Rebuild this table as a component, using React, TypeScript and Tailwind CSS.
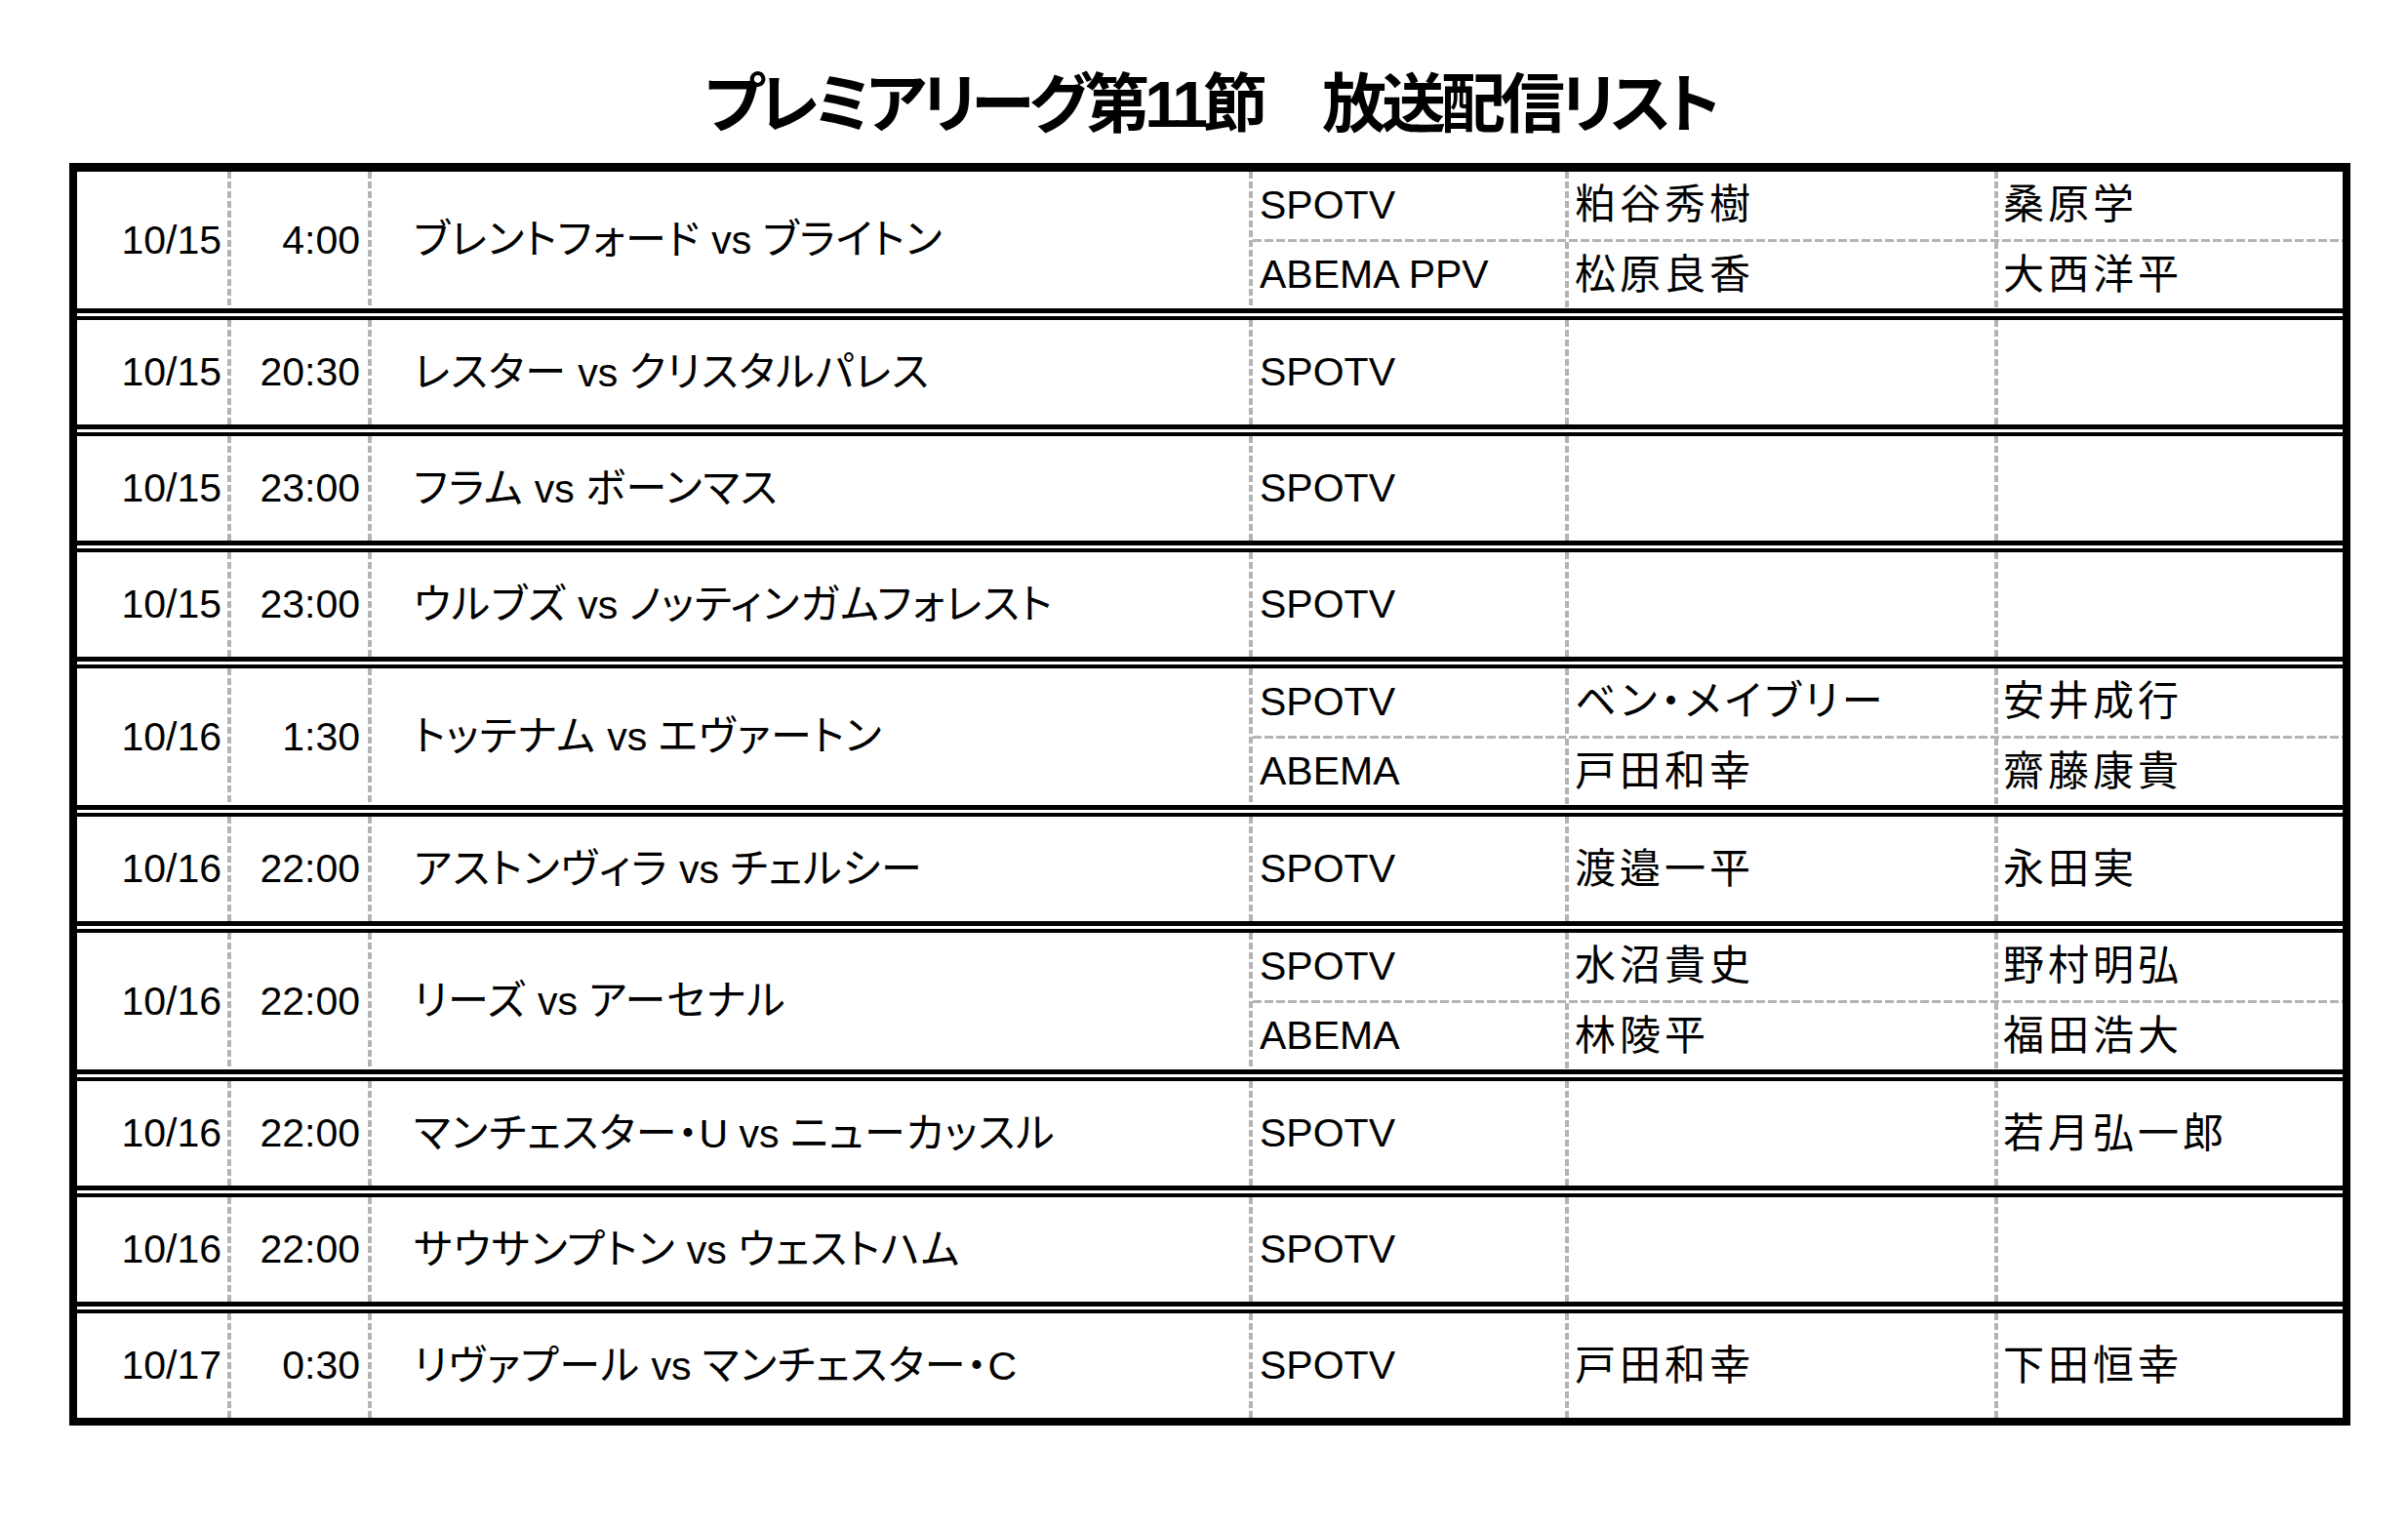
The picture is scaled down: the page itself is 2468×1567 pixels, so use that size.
import { Fragment } from "react";

type Line = { ch: string; a?: string; b?: string };
type Match = { date: string; time: string; match: string; lines: Line[] };

const matches: Match[] = [
  {
    date: "10/15",
    time: "4:00",
    match: "ブレントフォード vs ブライトン",
    lines: [
      { ch: "SPOTV", a: "粕谷秀樹", b: "桑原学" },
      { ch: "ABEMA PPV", a: "松原良香", b: "大西洋平" },
    ],
  },
  { date: "10/15", time: "20:30", match: "レスター vs クリスタルパレス", lines: [{ ch: "SPOTV" }] },
  { date: "10/15", time: "23:00", match: "フラム vs ボーンマス", lines: [{ ch: "SPOTV" }] },
  { date: "10/15", time: "23:00", match: "ウルブズ vs ノッティンガムフォレスト", lines: [{ ch: "SPOTV" }] },
  {
    date: "10/16",
    time: "1:30",
    match: "トッテナム vs エヴァートン",
    lines: [
      { ch: "SPOTV", a: "ベン・メイブリー", b: "安井成行" },
      { ch: "ABEMA", a: "戸田和幸", b: "齋藤康貴" },
    ],
  },
  {
    date: "10/16",
    time: "22:00",
    match: "アストンヴィラ vs チェルシー",
    lines: [{ ch: "SPOTV", a: "渡邉一平", b: "永田実" }],
  },
  {
    date: "10/16",
    time: "22:00",
    match: "リーズ vs アーセナル",
    lines: [
      { ch: "SPOTV", a: "水沼貴史", b: "野村明弘" },
      { ch: "ABEMA", a: "林陵平", b: "福田浩大" },
    ],
  },
  {
    date: "10/16",
    time: "22:00",
    match: "マンチェスター・U vs ニューカッスル",
    lines: [{ ch: "SPOTV", b: "若月弘一郎" }],
  },
  { date: "10/16", time: "22:00", match: "サウサンプトン vs ウェストハム", lines: [{ ch: "SPOTV" }] },
  {
    date: "10/17",
    time: "0:30",
    match: "リヴァプール vs マンチェスター・C",
    lines: [{ ch: "SPOTV", a: "戸田和幸", b: "下田恒幸" }],
  },
];

// latin runs are set a bit smaller than the japanese ones, like the printed sheet
function Jp({ text, tight }: { text?: string; tight?: boolean }) {
  if (!text) return null;
  const parts = text.split(/([\x20-\x7e]+)/).filter((p) => p !== "");
  return (
    <span className="whitespace-pre leading-none">
      {parts.map((p, i) =>
        /^[\x20-\x7e]+$/.test(p) ? (
          <span key={i} className="text-[41px]">
            {p}
          </span>
        ) : (
          <span key={i} className={tight ? "text-[42px] tracking-[1px]" : "text-[42px] tracking-[4px]"}>
            {p}
          </span>
        )
      )}
    </span>
  );
}

const VDash = () => (
  <div className="w-[4px] shrink-0 self-stretch bg-[image:repeating-linear-gradient(to_bottom,#b4b4b4_0px,#b4b4b4_7px,transparent_7px,transparent_10px)]" />
);

const HDash = () => (
  <div className="h-[3px] shrink-0 bg-[image:repeating-linear-gradient(to_right,#b4b4b4_0px,#b4b4b4_9px,transparent_9px,transparent_12px)]" />
);

function Row({ m, first, last }: { m: Match; first: boolean; last: boolean }) {
  const double = m.lines.length > 1;
  return (
    <div
      className={`${first ? "" : "mt-[3px] border-t-[4px] border-black"} ${
        last ? "" : "border-b-[5px] border-black"
      }`}
    >
      <div className={`flex ${double ? "h-[140px]" : "h-[107px]"}`}>
        <div className="flex w-[154px] shrink-0 items-center justify-end pr-[6px]">
          <Jp text={m.date} />
        </div>
        <VDash />
        <div className="flex w-[140px] shrink-0 items-center justify-end pr-[8px]">
          <Jp text={m.time} />
        </div>
        <VDash />
        <div className="flex w-[899px] shrink-0 items-center pl-[43px]">
          <Jp text={m.match} tight />
        </div>
        <VDash />
        <div className="flex flex-1 flex-col">
          {m.lines.map((l, i) => (
            <Fragment key={i}>
              {i > 0 && <HDash />}
              <div className="flex flex-1">
                <div className="flex w-[320px] shrink-0 items-center pl-[7px]">
                  <Jp text={l.ch} />
                </div>
                <VDash />
                <div className="flex w-[436px] shrink-0 items-center pl-[6px]">
                  <Jp text={l.a} />
                </div>
                <VDash />
                <div className="flex flex-1 items-center pl-[5px]">
                  <Jp text={l.b} />
                </div>
              </div>
            </Fragment>
          ))}
        </div>
      </div>
    </div>
  );
}

export default function App() {
  return (
    <div className="min-h-screen bg-white text-black font-['Liberation_Sans','Noto_Sans_CJK_JP',sans-serif] [font-feature-settings:'palt']">
      <div className="ml-[71px] flex h-[167px] w-[2338px] items-center justify-center pt-[46px]">
        <h1 className="text-[66px] font-bold leading-none tracking-[-5px]">
          プレミアリーグ第11節　放送配信リスト
        </h1>
      </div>
      <div className="ml-[71px] w-[2338px] border-x-[8px] border-t-[9px] border-b-[8px] border-black">
        {matches.map((m, i) => (
          <Row key={i} m={m} first={i === 0} last={i === matches.length - 1} />
        ))}
      </div>
    </div>
  );
}
